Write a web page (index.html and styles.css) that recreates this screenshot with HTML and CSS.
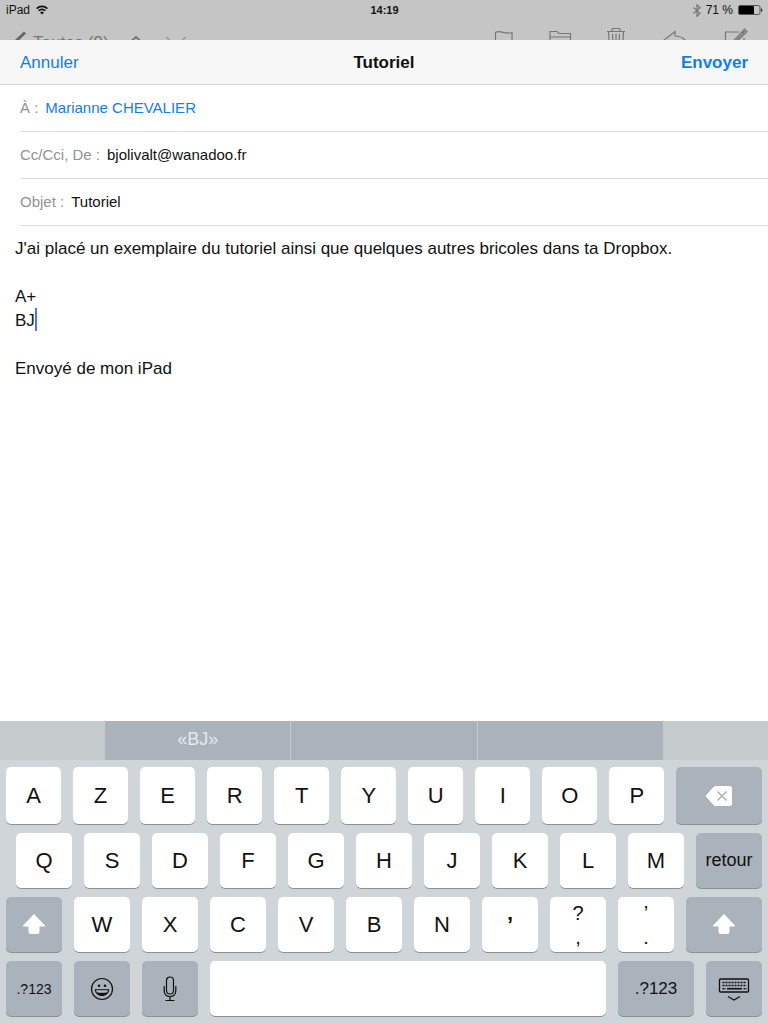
FILE: index.html
```html
<!DOCTYPE html>
<html lang="fr">
<head>
    <meta charset="UTF-8">
    <meta name="viewport" content="width=device-width, initial-scale=1.0">
    <title>Tutoriel</title>
    <link rel="stylesheet" href="styles.css">
</head>
<body>
    <div class="backdrop">
        <div class="status-bar">
            <div class="status-left">
                <span>iPad</span>
                <svg width="12" height="10" viewBox="0 0 12 10" fill="none" stroke="#111" stroke-width="1.6">
                    <path d="M0.6 3.6a7.7 7.7 0 0 1 10.8 0M2.6 5.8a4.8 4.8 0 0 1 6.8 0"/>
                    <path d="M6 9.6L4 7.5a2.8 2.8 0 0 1 4 0z" fill="#111" stroke="none"/>
                </svg>
            </div>
            <time class="clock">14:19</time>
            <div class="status-right">
                <svg width="8" height="13" viewBox="0 0 8 13" fill="none" stroke="#777" stroke-width="1.2">
                    <path d="M0.5 3.5l6.500 5.800L4 12.200V0.800l3 2.900-6.500 5.800"/>
                </svg>
                <span>71 %</span>
                <svg width="25" height="10" viewBox="0 0 25 10">
                    <rect x="0.5" y="0.5" width="21.5" height="9" rx="1.5" fill="none" stroke="#555"/>
                    <rect x="1" y="1" width="15" height="8" rx="0.5" fill="#000"/>
                    <path d="M23 3.2c1.8 0.3 1.8 3.3 0 3.6z" fill="#222"/>
                </svg>
            </div>
        </div>
        <div class="mail-toolbar">
            <svg class="back" width="14" height="22" viewBox="0 0 14 22" fill="none" stroke="#666" stroke-width="3">
                <path d="M12 1.5L2 11l10 9.5"/>
            </svg>
            <span class="mailbox">Toutes (9)</span>
            <svg class="arrow-up" width="20" height="12" viewBox="0 0 20 12" fill="none" stroke="#777" stroke-width="2">
                <path d="M1 10l9-8 9 8"/>
            </svg>
            <svg class="arrow-down" width="22" height="12" viewBox="0 0 22 12" fill="none" stroke="#999" stroke-width="1.5">
                <path d="M1 1l10 9 10-9"/>
            </svg>
            <div class="mail-actions">
                <svg width="24" height="26" viewBox="0 0 24 26" fill="none" stroke="#777" stroke-width="1.2">
                    <path d="M3.500 26V4.500c5-3 10 2.500 16.500 0v12c-6.500 3-11.500-3-16.500 0"/>
                </svg>
                <svg width="24" height="26" viewBox="0 0 24 26" fill="none" stroke="#777" stroke-width="1.2">
                    <path d="M1 20V3.500h7l2 2h11.500v14.500zM1 9h20.500"/>
                </svg>
                <svg width="24" height="26" viewBox="0 0 24 26" fill="none" stroke="#777" stroke-width="1.2">
                    <path d="M1 3.500h18M6 3V1.500q0-1 1-1h6q1 0 1 1V3M2.500 4l1 17h13l1-17M6.500 6l0.500 12M10 6v12M13.500 6l-0.500 12"/>
                </svg>
                <svg width="28" height="26" viewBox="0 0 28 26" fill="none" stroke="#777" stroke-width="1.2">
                    <path d="M0 13l12-9.500V8c7 0 12 4 14 12-4-5-8-6-14-6v6z"/>
                </svg>
                <svg width="24" height="26" viewBox="0 0 24 26" fill="none" stroke="#777" stroke-width="1.2">
                    <path d="M15 4H1.500v19H20V10"/>
                    <path d="M9 13.500L20.500 1l2.500 2.500L11 15.500l-3.500 1zM18.500 3l2.500 2.500M10 14.500L21.500 2.500"/>
                </svg>
            </div>
        </div>
    </div>

    <main class="compose">
        <header class="compose-header">
            <button type="button" class="link-button">Annuler</button>
            <h1>Tutoriel</h1>
            <button type="button" class="link-button send">Envoyer</button>
        </header>
        <div class="field">
            <label for="to">À :</label>
            <input type="text" id="to" class="recipient" value="Marianne CHEVALIER">
        </div>
        <div class="field">
            <label for="from">Cc/Cci, De :</label>
            <input type="text" id="from" value="bjolivalt@wanadoo.fr">
        </div>
        <div class="field">
            <label for="subject">Objet :</label>
            <input type="text" id="subject" value="Tutoriel">
        </div>
        <div class="message">
            <textarea aria-label="Message" spellcheck="false">J'ai placé un exemplaire du tutoriel ainsi que quelques autres bricoles dans ta Dropbox.

A+
BJ

Envoyé de mon iPad</textarea>
            <span class="caret"></span>
        </div>
    </main>

    <section class="keyboard">
        <div class="suggestions">
            <button type="button">«BJ»</button>
            <button type="button" aria-label="Suggestion 2"></button>
            <button type="button" aria-label="Suggestion 3"></button>
        </div>
        <div class="keys">
            <div class="key-row row-top">
                <button type="button" class="key">A</button>
                <button type="button" class="key">Z</button>
                <button type="button" class="key">E</button>
                <button type="button" class="key">R</button>
                <button type="button" class="key">T</button>
                <button type="button" class="key">Y</button>
                <button type="button" class="key">U</button>
                <button type="button" class="key">I</button>
                <button type="button" class="key">O</button>
                <button type="button" class="key">P</button>
                <button type="button" class="key dark delete" aria-label="Effacer">
                    <svg width="28" height="20" viewBox="0 0 28 20">
                        <path d="M0.500 10L8 1.500Q9.300 0 11 0h13.500Q27 0 27 2.500v15Q27 20 24.500 20H11q-1.700 0-3-1.500z" fill="#fff"/>
                        <path d="M12.500 5.500l9 9M21.500 5.500l-9 9" stroke="#aab2bc" stroke-width="1.500"/>
                    </svg>
                </button>
            </div>
            <div class="key-row row-home">
                <button type="button" class="key">Q</button>
                <button type="button" class="key">S</button>
                <button type="button" class="key">D</button>
                <button type="button" class="key">F</button>
                <button type="button" class="key">G</button>
                <button type="button" class="key">H</button>
                <button type="button" class="key">J</button>
                <button type="button" class="key">K</button>
                <button type="button" class="key">L</button>
                <button type="button" class="key">M</button>
                <button type="button" class="key dark return">retour</button>
            </div>
            <div class="key-row">
                <button type="button" class="key dark" aria-label="Majuscule">
                    <svg width="24" height="22" viewBox="0 0 24 22" fill="#fff">
                        <path d="M12 0L23 11.500q0.500 1-0.500 1H17.500V18q0 2-2 2h-7q-2 0-2-2v-5.500H1.500q-1 0-0.500-1z"/>
                    </svg>
                </button>
                <button type="button" class="key">W</button>
                <button type="button" class="key">X</button>
                <button type="button" class="key">C</button>
                <button type="button" class="key">V</button>
                <button type="button" class="key">B</button>
                <button type="button" class="key">N</button>
                <button type="button" class="key quote">’</button>
                <button type="button" class="key double"><span>?</span><span>,</span></button>
                <button type="button" class="key double"><span>’</span><span>.</span></button>
                <button type="button" class="key dark wide" aria-label="Majuscule">
                    <svg width="24" height="22" viewBox="0 0 24 22" fill="#fff">
                        <path d="M12 0L23 11.500q0.500 1-0.500 1H17.500V18q0 2-2 2h-7q-2 0-2-2v-5.500H1.500q-1 0-0.500-1z"/>
                    </svg>
                </button>
            </div>
            <div class="key-row">
                <button type="button" class="key dark small">.?123</button>
                <button type="button" class="key dark" aria-label="Emoji">
                    <svg width="24" height="24" viewBox="0 0 24 24">
                        <circle cx="12" cy="12" r="10.500" fill="none" stroke="#111" stroke-width="1.200"/>
                        <circle cx="9" cy="8.800" r="1.300" fill="#111"/>
                        <circle cx="15" cy="8.800" r="1.300" fill="#111"/>
                        <path d="M4.800 12.300h14.400c0 9-14.400 9-14.400 0z" fill="#111"/>
                        <path d="M6 13.200h12l-0.700 2q-5.300 1-10.600 0z" fill="#b6bdc6"/>
                    </svg>
                </button>
                <button type="button" class="key dark" aria-label="Dictée">
                    <svg width="14" height="26" viewBox="0 0 14 26" fill="none" stroke="#111" stroke-width="1.200">
                        <rect x="3.500" y="1" width="7" height="17" rx="3.500"/>
                        <path d="M1.200 10v4.500q0 6 5.800 6t5.800-6V10M7 20.500V24.500M2.500 24.500h9"/>
                    </svg>
                </button>
                <button type="button" class="key space" aria-label="Espace"></button>
                <button type="button" class="key dark wide">.?123</button>
                <button type="button" class="key dark" aria-label="Masquer le clavier">
                    <svg width="32" height="24" viewBox="0 0 32 24" fill="none" stroke="#111">
                        <rect x="1.500" y="2" width="29" height="13" rx="1" stroke-width="1.300"/>
                        <path d="M4.500 5.500h24M4.500 8.500h24" stroke-width="1.600" stroke-dasharray="2 1"/>
                        <path d="M4.500 11.700h3M25.500 11.700h3" stroke-width="1.600" stroke-dasharray="1.500 0.500"/>
                        <path d="M9 11.700h15" stroke-width="1.600"/>
                        <path d="M10 19.500l6 3.500 6-3.500" stroke-width="1.200"/>
                    </svg>
                </button>
            </div>
        </div>
    </section>
</body>
</html>
```

FILE: styles.css
```css
* {
    box-sizing: border-box;
}
body {
    display: flex;
    flex-direction: column;
    min-height: 100vh;
    margin: 0;
    font-family: "Liberation Sans", Arial, sans-serif;
    color: #111;
    background-color: #fff;
}
button,
input,
textarea {
    margin: 0;
    padding: 0;
    border: none;
    outline: none;
    background: none;
    font-family: inherit;
    color: inherit;
}
button {
    cursor: pointer;
}
svg {
    display: block;
    flex-shrink: 0;
}

/* Barre d'état et boîte de réception en arrière-plan */
.backdrop {
    height: 40px;
    overflow: hidden;
    background-color: #c5c5c5;
}
.status-bar {
    display: grid;
    grid-template-columns: 1fr auto 1fr;
    align-items: center;
    height: 20px;
    padding: 0 5px 0 6px;
    font-size: 12px;
}
.status-left,
.status-right {
    display: flex;
    align-items: center;
    gap: 6px;
}
.status-right {
    justify-content: flex-end;
    gap: 5px;
}
.clock {
    font-size: 11px;
    font-weight: bold;
}
.mail-toolbar {
    display: flex;
    align-items: flex-start;
    padding: 8px 20px 0 13px;
    color: #777;
}
.back {
    margin-top: 3px;
}
.mailbox {
    margin-left: 6px;
    padding-top: 5px;
    font-size: 17px;
    line-height: 20px;
}
.arrow-up {
    margin: 7px 0 0 17px;
}
.arrow-down {
    margin: 8px 0 0 19px;
}
.mail-actions {
    display: flex;
    gap: 33px;
    margin-left: auto;
}

.compose {
    display: flex;
    flex-direction: column;
    flex: 1;
}
.compose-header {
    display: grid;
    grid-template-columns: 1fr auto 1fr;
    align-items: center;
    height: 45px;
    padding: 2px 20px 0;
    border-bottom: 1px solid #d4d4d4;
    background-color: #f7f7f7;
}
.compose-header h1 {
    margin: 0;
    font-size: 17px;
}
.link-button {
    justify-self: start;
    font-size: 17px;
    color: #117cf6;
}
.send {
    justify-self: end;
    font-weight: bold;
}
.field {
    display: flex;
    align-items: center;
    gap: 7px;
    height: 47px;
    margin-left: 20px;
    padding-bottom: 2px;
    border-bottom: 1px solid #dedede;
    font-size: 15px;
}
.field label {
    color: #929296;
}
.field input {
    flex: 1;
    min-width: 0;
    font-size: 15px;
}
.field .recipient {
    color: #117cf6;
}
.message {
    position: relative;
    display: flex;
    flex: 1;
}
.message textarea {
    flex: 1;
    padding: 11px 15px;
    font-size: 17px;
    line-height: 24px;
    resize: none;
    overflow: hidden;
}
.caret {
    position: absolute;
    top: 82px;
    left: 35px;
    width: 2px;
    height: 23px;
    background-color: #4a74f0;
}

.keyboard {
    background-color: #d0d5d9;
}
.suggestions {
    display: flex;
    gap: 1px;
    height: 39px;
    padding: 0 105px;
    background-color: #c5cacd;
}
.suggestions button {
    flex: 1;
    padding-bottom: 2px;
    font-size: 18px;
    color: #e6e9ec;
    background-color: #aab2bc;
}
.keys {
    display: flex;
    flex-direction: column;
    gap: 9px;
    padding: 7px 6px 8px;
}
.key-row {
    display: flex;
    gap: 12px;
    height: 55px;
}
.row-top {
    height: 57px;
}
.row-home {
    padding-left: 10px;
}
.key {
    display: flex;
    flex: 56 1 0;
    align-items: center;
    justify-content: center;
    min-width: 0;
    border-radius: 5px;
    font-size: 22px;
    background-color: #fff;
    box-shadow: 0 1px 0 #8d9196;
}
.key.dark {
    font-size: 18px;
    background-color: #aab2bc;
}
.key.dark.small {
    font-size: 14px;
}
.key.wide {
    flex-grow: 76;
}
.key.dark.wide {
    font-size: 17px;
}
.key.return {
    flex-grow: 66;
}
.key.delete {
    flex-grow: 87;
}
.key.space {
    flex-grow: 396;
}
.key.quote {
    font-weight: bold;
}
.key.double {
    flex-direction: column;
    font-size: 20px;
    line-height: 24px;
}
```
